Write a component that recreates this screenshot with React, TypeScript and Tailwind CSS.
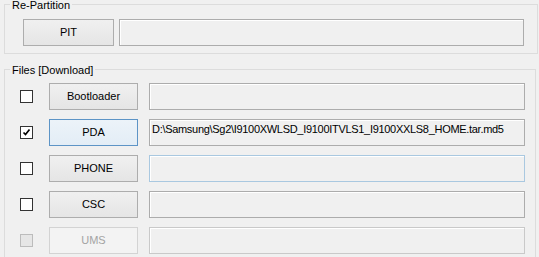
import React from "react";

const font = { fontFamily: '"Liberation Sans", Arial, sans-serif' };

function Group({ title, className, children }: { title: string; className: string; children: React.ReactNode }) {
  return (
    <div className={`relative border border-[#dcdcdc] ${className}`}>
      <div className="absolute -top-[6px] left-[5px] bg-[#f0f0f0] px-[2px] text-[11px] leading-[12px] text-black whitespace-nowrap">
        {title}
      </div>
      {children}
    </div>
  );
}

function Btn({ label, variant = "normal", w }: { label: string; variant?: "normal" | "focus" | "disabled"; w: string }) {
  const cls =
    variant === "focus"
      ? "border-[#5d94c6] bg-[linear-gradient(#ecf3f9,#e3edf6)] text-black"
      : variant === "disabled"
      ? "border-[#d3d3d3] bg-[#f3f3f3] text-[#a3a3a3]"
      : "border-[#adadad] bg-[linear-gradient(#f0f0f0,#e5e5e5)] text-black";
  return (
    <div className={`${w} h-[27px] shrink-0 border flex items-center justify-center text-[11px] ${cls}`}>
      {label}
    </div>
  );
}

function TextBox({ w, value, variant = "normal" }: { w: string; value?: string; variant?: "normal" | "hover" | "disabled" }) {
  const cls =
    variant === "hover"
      ? "border-[#a9c8e0]"
      : variant === "disabled"
      ? "border-[#c9c9c9]"
      : "border-[#acacac]";
  return (
    <div className={`${w} h-[27px] shrink-0 border ${cls} bg-[#f0f0f0] shadow-[inset_1px_1px_0_#ffffff] pl-[2px] pt-[3px] text-[11px] leading-[13px] tracking-[-0.3px] text-black whitespace-nowrap overflow-hidden`}>
      {value}
    </div>
  );
}

function Check({ checked, disabled }: { checked?: boolean; disabled?: boolean }) {
  return (
    <div
      className={`w-[13px] h-[13px] shrink-0 border flex items-center justify-center ${
        disabled ? "border-[#bcbcbc] bg-[#e6e6e6]" : "border-[#333333] bg-white"
      }`}
    >
      {checked && (
        <svg width="9" height="9" viewBox="0 0 9 9">
          <path d="M1.5 4.5 L3.5 6.5 L7.5 1.5" fill="none" stroke="#000" strokeWidth="1.7" />
        </svg>
      )}
    </div>
  );
}

const rows: { label: string; checked?: boolean; value?: string; btn?: "normal" | "focus" | "disabled"; tb?: "normal" | "hover" | "disabled"; disabled?: boolean }[] = [
  { label: "Bootloader" },
  { label: "PDA", checked: true, btn: "focus", value: "D:\\Samsung\\Sg2\\I9100XWLSD_I9100ITVLS1_I9100XXLS8_HOME.tar.md5" },
  { label: "PHONE", tb: "hover" },
  { label: "CSC" },
  { label: "UMS", btn: "disabled", tb: "disabled", disabled: true },
];

export default function App() {
  return (
    <div style={font} className="w-[539px] h-[257px] bg-[#f0f0f0] overflow-hidden pt-[4px] pl-[4px] flex flex-col">
      <Group title="Re-Partition" className="w-[534px] h-[50px] shrink-0">
        <div className="flex pl-[18px] pt-[14px] gap-[5px]">
          <Btn label="PIT" w="w-[91px]" />
          <TextBox w="w-[405px]" />
        </div>
      </Group>
      <Group title="Files [Download]" className="mt-[15px] w-[532px] h-[220px] shrink-0">
        <div className="flex flex-col pl-[15px] pt-[13px] gap-[9px]">
          {rows.map((r) => (
            <div key={r.label} className="flex items-center">
              <Check checked={r.checked} disabled={r.disabled} />
              <div className="w-[16px] shrink-0" />
              <Btn label={r.label} w="w-[89px]" variant={r.btn} />
              <div className="w-[11px] shrink-0" />
              <TextBox w="w-[376px]" value={r.value} variant={r.tb} />
            </div>
          ))}
        </div>
      </Group>
    </div>
  );
}
